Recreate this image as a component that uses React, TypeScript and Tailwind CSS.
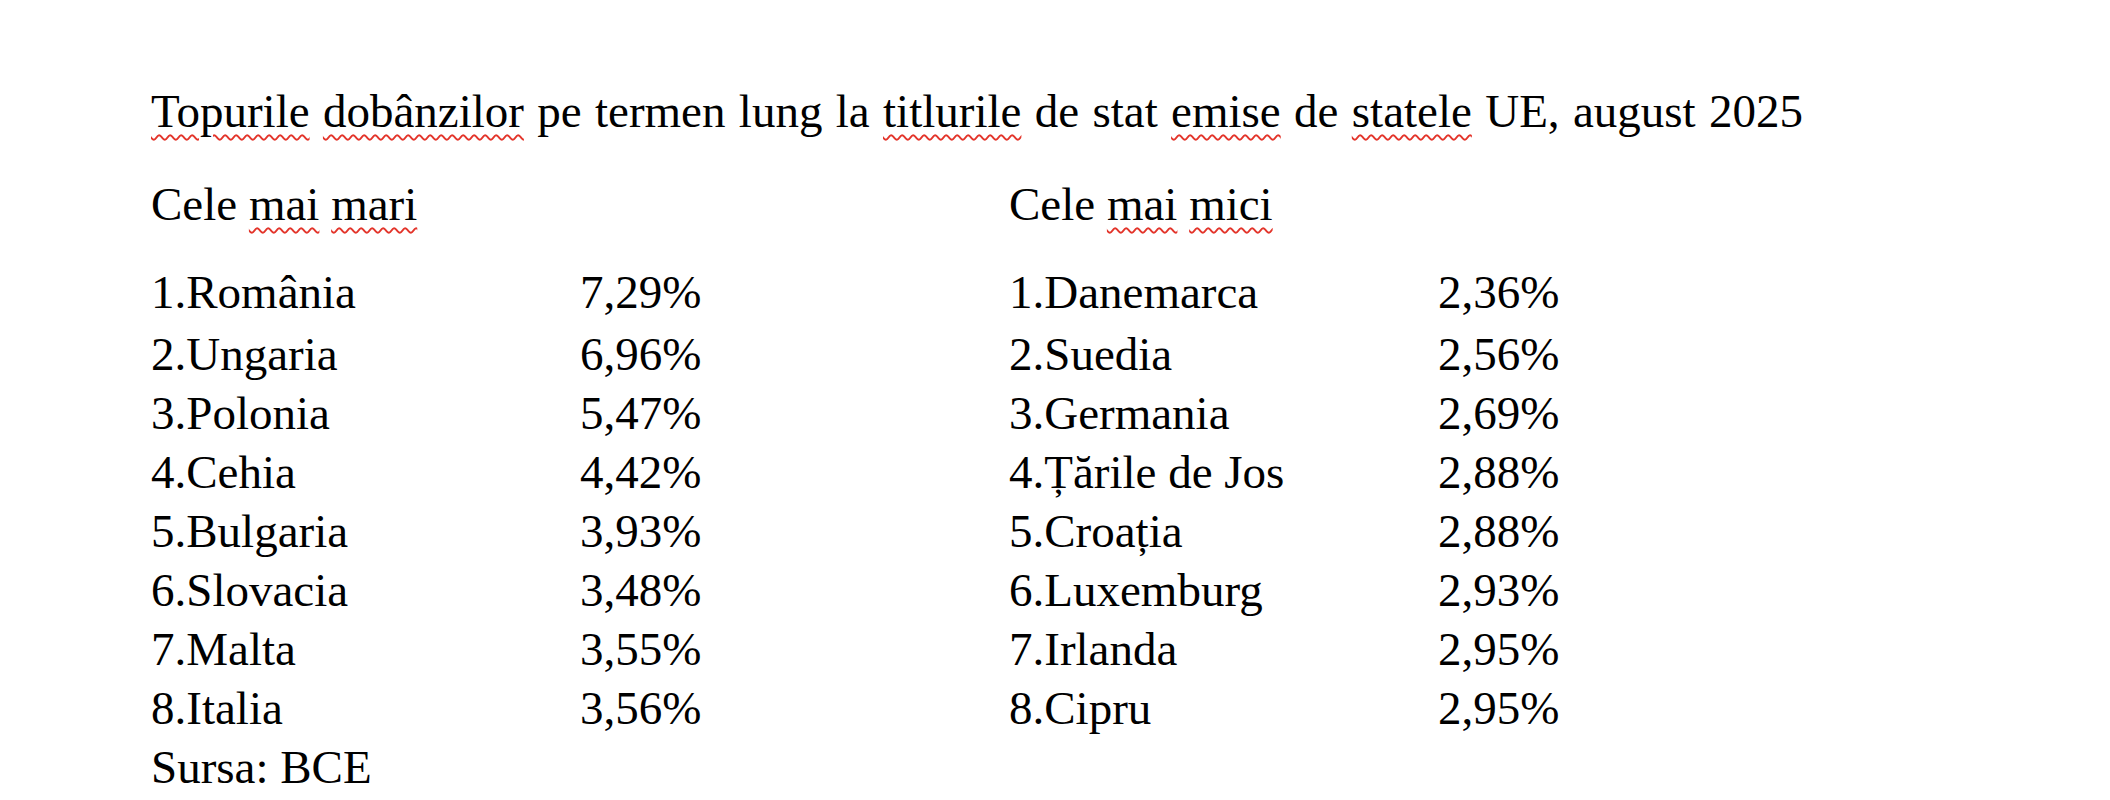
import React from "react";

type Row = { name: string; value: string };

const highest: Row[] = [
  { name: "1.România", value: "7,29%" },
  { name: "2.Ungaria", value: "6,96%" },
  { name: "3.Polonia", value: "5,47%" },
  { name: "4.Cehia", value: "4,42%" },
  { name: "5.Bulgaria", value: "3,93%" },
  { name: "6.Slovacia", value: "3,48%" },
  { name: "7.Malta", value: "3,55%" },
  { name: "8.Italia", value: "3,56%" },
];

const lowest: Row[] = [
  { name: "1.Danemarca", value: "2,36%" },
  { name: "2.Suedia", value: "2,56%" },
  { name: "3.Germania", value: "2,69%" },
  { name: "4.Țările de Jos", value: "2,88%" },
  { name: "5.Croația", value: "2,88%" },
  { name: "6.Luxemburg", value: "2,93%" },
  { name: "7.Irlanda", value: "2,95%" },
  { name: "8.Cipru", value: "2,95%" },
];

// spell-check squiggle, like the word processor draws it
function Sq({ children }: { children: React.ReactNode }) {
  return (
    <span className="underline decoration-wavy decoration-[#e3342a] decoration-[1.5px] underline-offset-[7px]">
      {children}
    </span>
  );
}

function Column({
  heading,
  rows,
  footer,
}: {
  heading: React.ReactNode;
  rows: Row[];
  footer?: string;
}) {
  return (
    <div className="w-[858px]">
      <p className="mb-[29px]">{heading}</p>
      {rows.map((r, i) => (
        <div
          key={r.name}
          className={`grid grid-cols-[429px_auto] ${i === 0 ? "mb-[3px]" : ""}`}
        >
          <span>{r.name}</span>
          <span>{r.value}</span>
        </div>
      ))}
      {footer && <p>{footer}</p>}
    </div>
  );
}

export default function App() {
  return (
    <div className="min-h-[800px] bg-white pl-[151px] pt-[82px] font-['Liberation_Serif','Times_New_Roman',serif] text-[47px] leading-[59px] text-black">
      {/* Title */}
      <p className="mb-[34px] whitespace-nowrap [word-spacing:1.6px]">
        <Sq>Topurile</Sq> <Sq>dobânzilor</Sq> pe termen lung la{" "}
        <Sq>titlurile</Sq> de stat <Sq>emise</Sq> de <Sq>statele</Sq> UE,
        august 2025
      </p>

      <div className="flex">
        <Column
          heading={
            <>
              Cele <Sq>mai</Sq> <Sq>mari</Sq>
            </>
          }
          rows={highest}
          footer="Sursa: BCE"
        />
        <Column
          heading={
            <>
              Cele <Sq>mai</Sq> <Sq>mici</Sq>
            </>
          }
          rows={lowest}
        />
      </div>
    </div>
  );
}
